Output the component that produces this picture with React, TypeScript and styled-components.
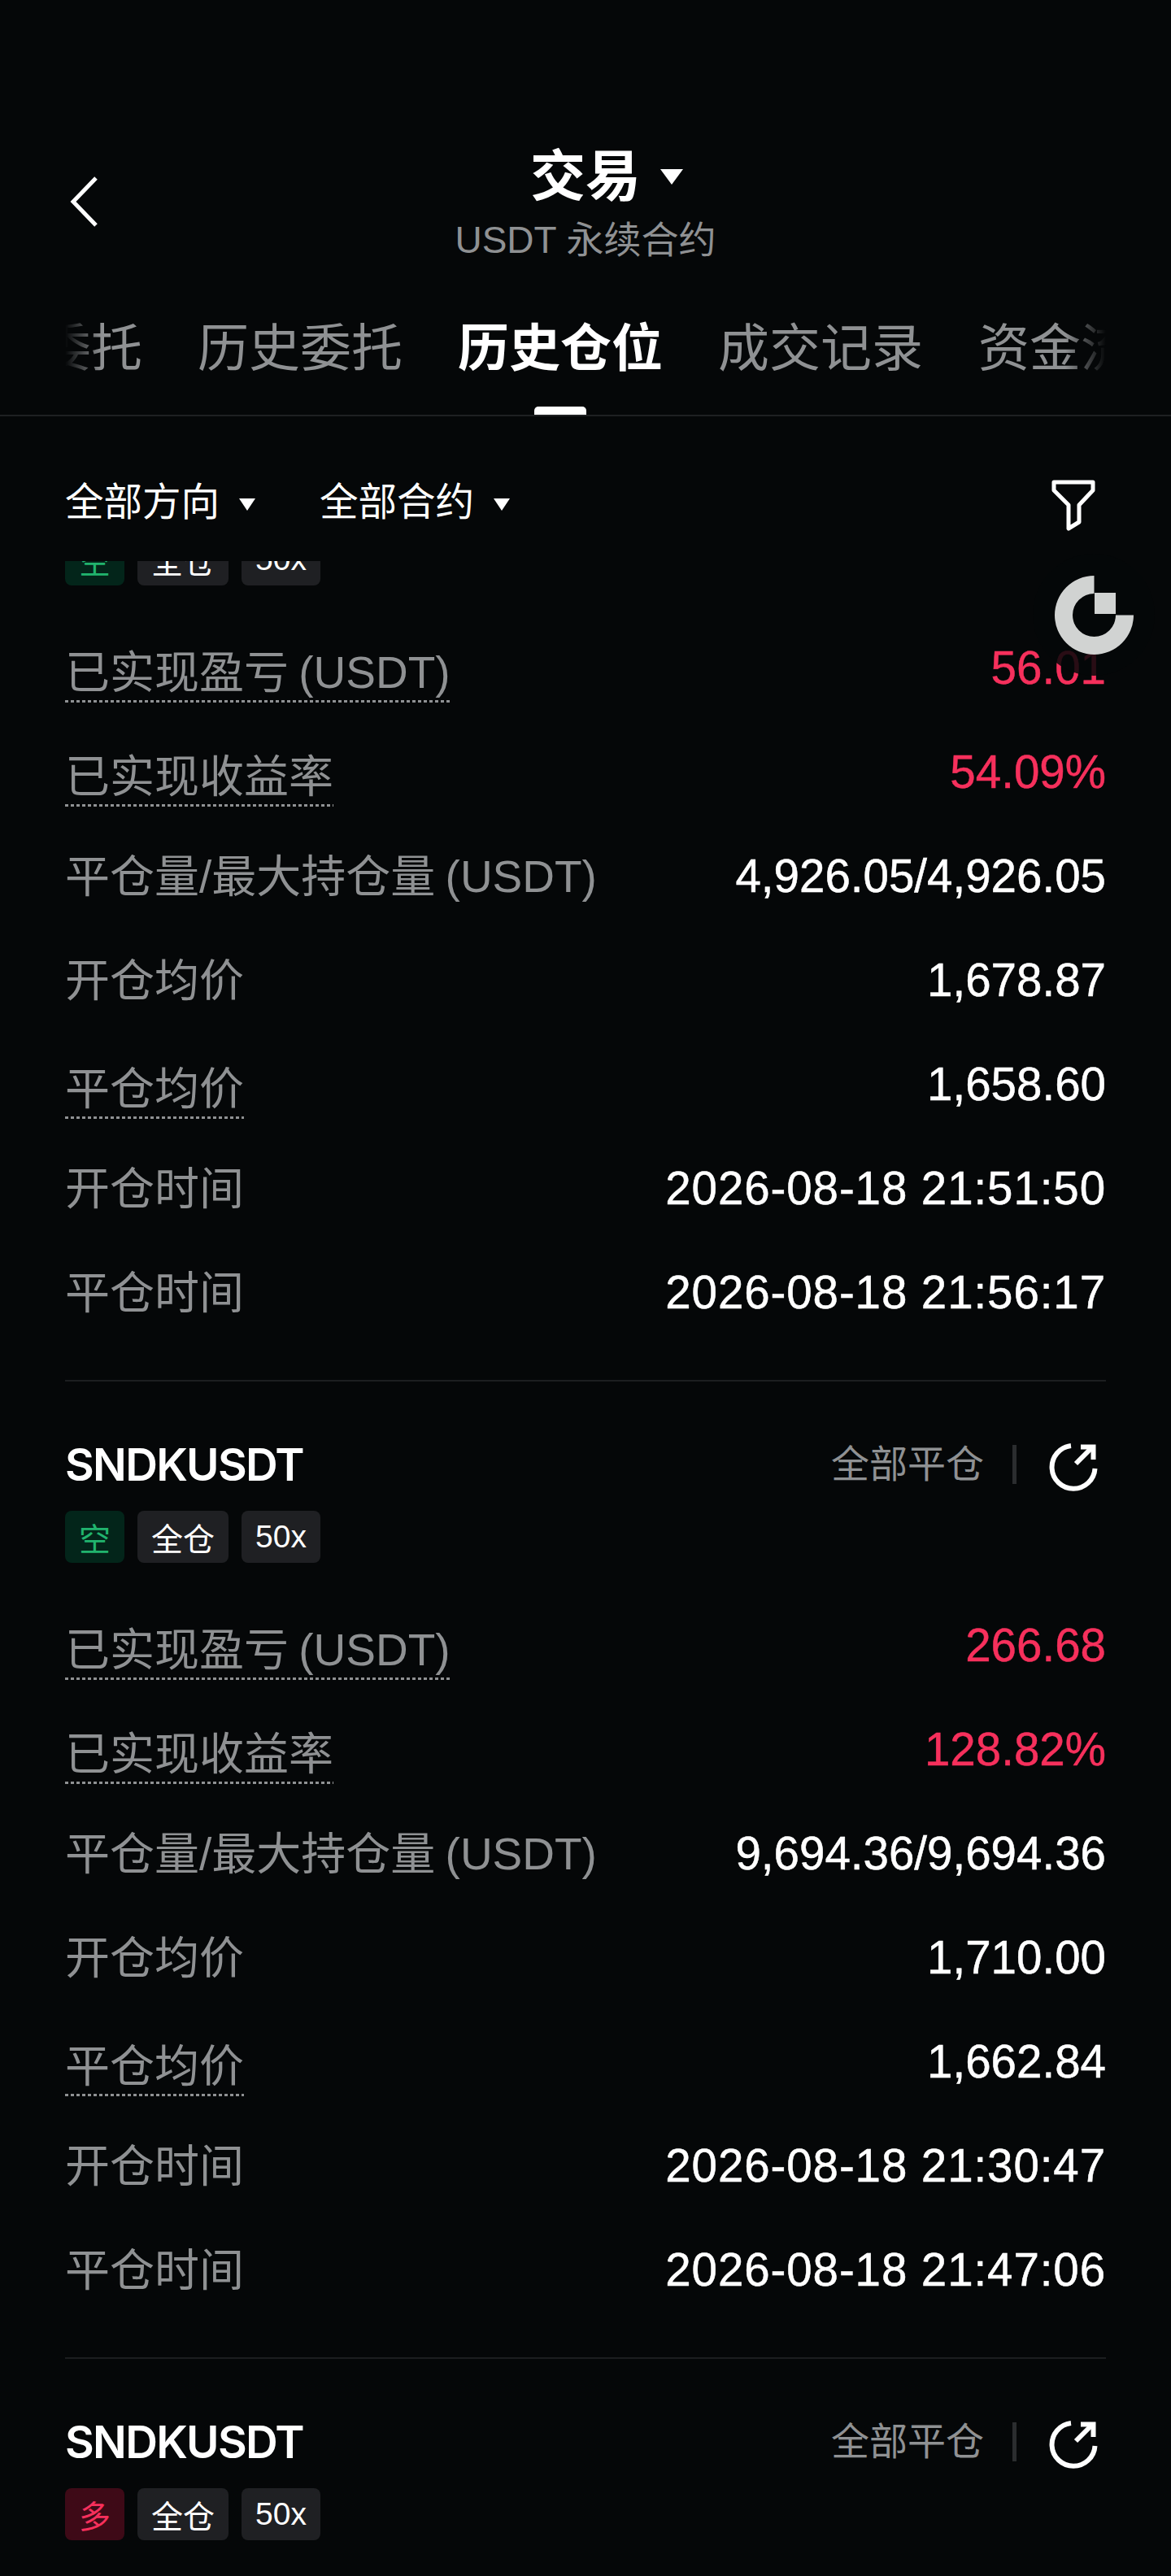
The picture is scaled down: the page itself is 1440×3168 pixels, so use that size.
import React from "react";
import styled, { createGlobalStyle } from "styled-components";

const FONT = `"Liberation Sans", "Noto Sans CJK SC", sans-serif`;
const GREY = "#8f9193";
const RED = "#f6305c";

const GlobalStyle = createGlobalStyle`
    html, body {
        margin: 0;
        padding: 0;
        background: #050708;
    }
    * {
        box-sizing: border-box;
    }
`;

type Row = { label: string; value: string; dotted?: boolean; red?: boolean; time?: boolean };
type Trade = { side: "long" | "short"; rows: Row[] };

const makeRows = (pnl: string, rate: string, size: string, open: string, close: string, t1: string, t2: string): Row[] => [
    { label: "已实现盈亏 (USDT)", value: pnl, dotted: true, red: true },
    { label: "已实现收益率", value: rate, dotted: true, red: true },
    { label: "平仓量/最大持仓量 (USDT)", value: size },
    { label: "开仓均价", value: open },
    { label: "平仓均价", value: close, dotted: true },
    { label: "开仓时间", value: t1, time: true },
    { label: "平仓时间", value: t2, time: true },
];

const trades: Trade[] = [
    {
        side: "short",
        rows: makeRows("56.01", "54.09%", "4,926.05/4,926.05", "1,678.87", "1,658.60", "2026-08-18 21:51:50", "2026-08-18 21:56:17"),
    },
    {
        side: "short",
        rows: makeRows("266.68", "128.82%", "9,694.36/9,694.36", "1,710.00", "1,662.84", "2026-08-18 21:30:47", "2026-08-18 21:47:06"),
    },
    { side: "long", rows: [] },
];

const tabs = ["当前委托", "历史委托", "历史仓位", "成交记录", "资金流水"];

export default function App() {
    return (
        <Screen>
            <GlobalStyle />
            <Header>
                <BackIcon viewBox="0 0 36 64">
                    <path d="M33 3 L5 32 L33 61" />
                </BackIcon>
                <HeaderCenter>
                    <TitleRow>
                        <Title>交易</Title>
                        <TitleCaret />
                    </TitleRow>
                    <Subtitle>USDT 永续合约</Subtitle>
                </HeaderCenter>
            </Header>

            <TabBar>
                <TabScroll>
                    <TabList>
                        {tabs.map((tab, index) => (
                            <Tab key={tab} $active={index === 2}>
                                {tab}
                            </Tab>
                        ))}
                    </TabList>
                </TabScroll>
            </TabBar>

            <FilterRow>
                <FilterGroup>
                    <FilterItem>
                        全部方向
                        <FilterCaret />
                    </FilterItem>
                    <FilterItem>
                        全部合约
                        <FilterCaret />
                    </FilterItem>
                </FilterGroup>
                <FilterIcon viewBox="0 0 54 63">
                    <path d="M3 3 H51 V13 L34 31 V52 L21 60 V31 L3 13 Z" />
                </FilterIcon>
            </FilterRow>

            <List>
                <ListInner>
                    {trades.map((trade, index) => (
                        <Card key={index}>
                            <CardHead>
                                <Symbol>SNDKUSDT</Symbol>
                                <CardActions>
                                    <CloseAll>全部平仓</CloseAll>
                                    <ActionDivider />
                                    <ShareIcon viewBox="0 0 60 60">
                                        <path d="M27 4 A26.5 26.5 0 1 0 56.5 32" />
                                        <path d="M33 26 L54 5" />
                                        <path d="M39 5.5 H54.5 V21" />
                                    </ShareIcon>
                                </CardActions>
                            </CardHead>
                            <Tags>
                                <SideTag $side={trade.side}>{trade.side === "short" ? "空" : "多"}</SideTag>
                                <Tag>全仓</Tag>
                                <Tag>50x</Tag>
                            </Tags>
                            <Rows>
                                {trade.rows.map((row) => (
                                    <DataRow key={row.label}>
                                        <Label $dotted={row.dotted}>{row.label}</Label>
                                        <Value $red={row.red} $time={row.time}>
                                            {row.value}
                                        </Value>
                                    </DataRow>
                                ))}
                            </Rows>
                        </Card>
                    ))}
                </ListInner>
            </List>

            <FloatBadge>
                <svg width="97" height="97" viewBox="0 0 97 97">
                    <path d="M48.5 0 A48.5 48.5 0 1 0 97 48.5 L75 48.5 A26.5 26.5 0 1 1 48.5 22 Z" fill="#d1d3d2" />
                    <rect x="49" y="21" width="26" height="26" fill="#d1d3d2" />
                </svg>
            </FloatBadge>
        </Screen>
    );
}

const Screen = styled.div`
    position: relative;
    display: flex;
    flex-direction: column;
    width: 1440px;
    height: 3168px;
    overflow: hidden;
    background: #050708;
    color: #fff;
    font-family: ${FONT};
`;

const Header = styled.header`
    display: grid;
    grid-template-columns: 1fr auto 1fr;
    padding: 177px 85px 0;
`;

const BackIcon = styled.svg`
    width: 36px;
    height: 64px;
    align-self: center;
    margin-top: -6px;

    path {
        fill: none;
        stroke: #fff;
        stroke-width: 5;
    }
`;

const HeaderCenter = styled.div`
    display: flex;
    flex-direction: column;
    align-items: center;
    grid-column: 2;
`;

const TitleRow = styled.div`
    display: grid;
    grid-template-columns: 1fr auto 1fr;
    align-items: center;
    width: 100%;
`;

const Title = styled.h1`
    grid-column: 2;
    margin: 0;
    font-size: 68px;
    line-height: 80px;
    font-weight: 700;
`;

const TitleCaret = styled.span`
    justify-self: start;
    margin-left: 24px;
    width: 0;
    height: 0;
    border-left: 14px solid transparent;
    border-right: 14px solid transparent;
    border-top: 19px solid #fff;
`;

const Subtitle = styled.div`
    margin-top: 8px;
    font-size: 46px;
    line-height: 60px;
    color: ${GREY};
`;

const TabBar = styled.nav`
    margin-top: 56px;
    height: 131px;
    border-bottom: 2px solid #1e2022;
`;

const TabScroll = styled.div`
    margin: 0 80px;
    height: 129px;
    overflow: hidden;
    -webkit-mask-image: linear-gradient(90deg, transparent 0, #000 45px, #000 calc(100% - 50px), transparent 100%);
    mask-image: linear-gradient(90deg, transparent 0, #000 45px, #000 calc(100% - 50px), transparent 100%);
`;

const TabList = styled.div`
    display: flex;
    gap: 68px;
    width: max-content;
    margin-left: -157px;
`;

const Tab = styled.div<{ $active?: boolean }>`
    position: relative;
    height: 129px;
    padding-top: 2px;
    font-size: 63px;
    line-height: 90px;
    font-weight: ${(p) => (p.$active ? 700 : 400)};
    color: ${(p) => (p.$active ? "#fff" : GREY)};

    ${(p) =>
        p.$active &&
        `&::after {
            content: "";
            position: absolute;
            left: 50%;
            bottom: 0;
            width: 64px;
            height: 10px;
            margin-left: -32px;
            border-radius: 5px 5px 0 0;
            background: #fff;
        }`}
`;

const FilterRow = styled.div`
    display: flex;
    justify-content: space-between;
    align-items: flex-start;
    height: 178px;
    padding: 76px 93px 0 80px;
    flex-shrink: 0;
`;

const FilterGroup = styled.div`
    display: flex;
    gap: 79px;
`;

const FilterItem = styled.div`
    display: flex;
    align-items: center;
    gap: 24px;
    font-size: 47.5px;
    line-height: 60px;
`;

const FilterCaret = styled.span`
    width: 0;
    height: 0;
    margin-top: 4px;
    border-left: 10px solid transparent;
    border-right: 10px solid transparent;
    border-top: 15px solid #fff;
`;

const FilterIcon = styled.svg`
    width: 54px;
    height: 63px;
    margin-top: 2px;

    path {
        fill: none;
        stroke: #fff;
        stroke-width: 5;
        stroke-linejoin: round;
    }
`;

const List = styled.div`
    flex: 1;
    min-height: 0;
    overflow: hidden;
`;

const ListInner = styled.div`
    margin-top: -195px;
`;

const Card = styled.section`
    margin: 0 80px;
    padding: 70px 0 43px;
    border-top: 2px solid #1c1e20;
`;

const CardHead = styled.div`
    display: flex;
    justify-content: space-between;
    align-items: center;
    height: 64px;
`;

const Symbol = styled.div`
    font-family: Inter, sans-serif;
    font-size: 55px;
    font-weight: 600;
    letter-spacing: -1.7px;
    line-height: 64px;
`;

const CardActions = styled.div`
    display: flex;
    align-items: center;
`;

const CloseAll = styled.span`
    font-size: 47px;
    line-height: 60px;
    color: ${GREY};
`;

const ActionDivider = styled.span`
    width: 5px;
    height: 48px;
    margin: 0 40px 0 35px;
    background: #2b2d2f;
`;

const ShareIcon = styled.svg`
    width: 60px;
    height: 60px;
    margin: 6px 10px 0 0;

    path {
        fill: none;
        stroke: #fff;
        stroke-width: 6;
    }
`;

const Tags = styled.div`
    display: flex;
    gap: 16px;
    margin-top: 25px;
`;

const Tag = styled.span`
    display: flex;
    align-items: center;
    height: 64px;
    padding: 0 17px;
    border-radius: 8px;
    background: #1f2023;
    font-size: 39px;
`;

const SideTag = styled(Tag)<{ $side: "long" | "short" }>`
    background: ${(p) => (p.$side === "short" ? "#03251a" : "#3e0a17")};
    color: ${(p) => (p.$side === "short" ? "#21b36e" : RED)};
`;

const Rows = styled.div`
    margin-top: 38px;
`;

const DataRow = styled.div`
    display: flex;
    justify-content: space-between;
    align-items: center;
    height: 128px;
`;

const Label = styled.span<{ $dotted?: boolean }>`
    font-size: 55px;
    line-height: 64px;
    word-spacing: -3px;
    color: ${GREY};

    ${(p) =>
        p.$dotted &&
        `margin-top: 15px;
        padding-bottom: 5px;
        background: repeating-linear-gradient(90deg, ${GREY} 0 4px, transparent 4px 7px) left bottom / 100% 3px no-repeat;`}
`;

const Value = styled.span<{ $red?: boolean; $time?: boolean }>`
    font-size: 56.5px;
    line-height: 64px;
    color: ${(p) => (p.$red ? RED : "#fff")};
    letter-spacing: ${(p) => (p.$time ? "0.9px" : "0")};
    -webkit-text-stroke: 0.5px currentColor;
`;

const FloatBadge = styled.div`
    position: absolute;
    top: 681px;
    left: 1270px;
    display: flex;
    align-items: center;
    justify-content: center;
    width: 150px;
    height: 150px;
    border-radius: 50%;
    background: rgba(5, 7, 8, 0.85);
`;
